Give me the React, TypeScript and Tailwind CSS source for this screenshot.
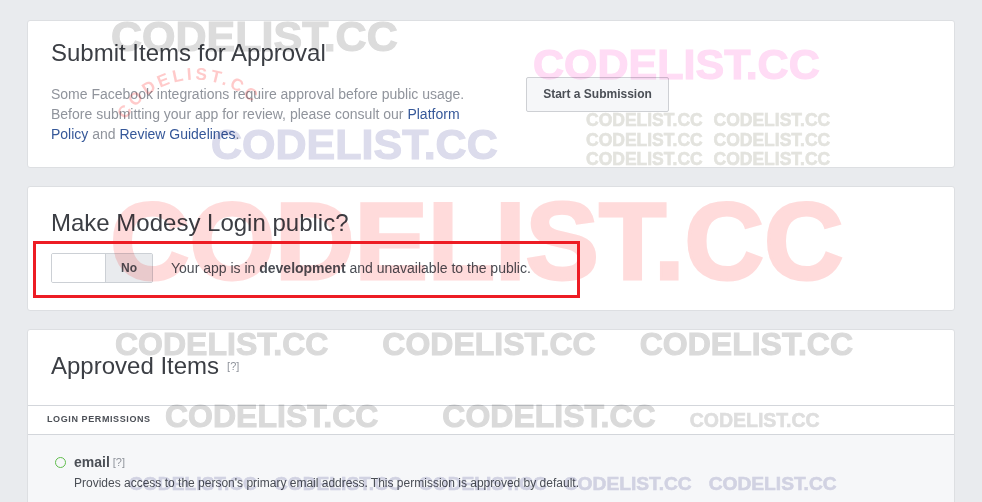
import React from "react";

export default function App() {
  return (
    <div className="relative w-[982px] h-[502px] overflow-hidden bg-[#e9ebee] font-['Liberation_Sans',Arial,sans-serif]">
      <div className="flex flex-col gap-[18px] pl-[27px] pt-[20px] w-[955px]">
        {/* Card 1 */}
        <div className="flex h-[148px] rounded-[3px] border border-[#dddfe2] bg-white px-[23px]">
          <div className="w-[440px] pt-[18px]">
            <h2 className="text-[24px] leading-[28px] text-[#3b3e44]">Submit Items for Approval</h2>
            <p className="mt-[17px] text-[14px] leading-[20px] text-[#90949c]">
              Some Facebook integrations require approval before public usage. Before submitting your app for review, please consult our{" "}
              <span className="text-[#365899]">Platform Policy</span> and{" "}
              <span className="text-[#365899]">Review Guidelines</span>.
            </p>
          </div>
          <div className="ml-[35px] flex items-center">
            <button className="h-[35px] w-[143px] rounded-[2px] border border-[#ced0d4] bg-[#f6f7f9] text-[12px] font-bold text-[#4b4f56]">
              Start a Submission
            </button>
          </div>
        </div>

        {/* Card 2 */}
        <div className="h-[125px] rounded-[3px] border border-[#dddfe2] bg-white px-[23px] pt-[22px]">
          <h2 className="text-[24px] leading-[28px] text-[#3b3e44]">Make Modesy Login public?</h2>
          <div className="mt-[16px] flex items-center">
            <div className="flex h-[30px] w-[102px] overflow-hidden rounded-[2px] border border-[#ccd0d5]">
              <div className="w-[53px] bg-white" />
              <div className="flex flex-1 items-center justify-center border-l border-[#ccd0d5] bg-[#e9ebee] text-[12px] font-bold text-[#4b4f56]">
                No
              </div>
            </div>
            <p className="ml-[18px] text-[14px] leading-[18px] text-[#4b4f56]">
              Your app is in <span className="font-bold">development</span> and unavailable to the public.
            </p>
          </div>
        </div>

        {/* Card 3 */}
        <div className="h-[200px] rounded-[3px] border border-[#dddfe2] bg-white">
          <div className="flex h-[75px] items-start px-[23px] pt-[22px]">
            <div className="flex items-center">
              <h2 className="text-[24px] leading-[28px] text-[#3b3e44]">Approved Items</h2>
              <span className="ml-[8px] text-[11px] text-[#90949c]">[?]</span>
            </div>
          </div>
          <div className="flex h-[30px] items-center border-y border-[#d3d6db] px-[19px]">
            <span className="text-[9px] font-bold tracking-[0.6px] text-[#4b4f56]">LOGIN PERMISSIONS</span>
          </div>
          <div className="h-[100px] bg-[#f6f7f9] pl-[27px] pt-[18px]">
            <div className="flex items-center">
              <div className="h-[11px] w-[11px] rounded-full border-[1.5px] border-[#5fbd4c]" />
              <span className="ml-[8px] text-[14px] font-bold leading-[18px] text-[#4b4f56]">email</span>
              <span className="ml-[3px] text-[11px] leading-[18px] text-[#90949c]">[?]</span>
            </div>
            <p className="ml-[19px] mt-[4px] text-[12px] leading-[16px] text-[#4b4f56]">
              Provides access to the person's primary email address. This permission is approved by default.
            </p>
          </div>
        </div>
      </div>

      {/* Watermarks (overlay, multiplied onto the page) */}
      <div className="pointer-events-none absolute inset-0 mix-blend-multiply font-['Liberation_Sans',Arial,sans-serif] font-bold leading-none whitespace-nowrap">
        <div className="absolute left-[111px] top-[15px] text-[43px] text-[#dcdcdc] [-webkit-text-stroke:1.2px_#dcdcdc]">CODELIST.CC</div>
        <div className="absolute left-[533px] top-[43px] text-[43px] text-[#ffdcf5] [-webkit-text-stroke:1.2px_#ffdcf5]">CODELIST.CC</div>
        <div className="absolute left-[211px] top-[123px] text-[43px] text-[#dcdcec] [-webkit-text-stroke:1.2px_#dcdcec]">CODELIST.CC</div>
        <div className="absolute left-[586px] top-[111px] flex flex-col text-[17.5px] leading-[19.5px] [word-spacing:6px] text-[#e3e3de] [-webkit-text-stroke:0.6px_#e3e3de]">
          <span>CODELIST.CC CODELIST.CC</span>
          <span>CODELIST.CC CODELIST.CC</span>
          <span>CODELIST.CC CODELIST.CC</span>
        </div>
        <svg className="absolute left-[100px] top-[50px] h-[150px] w-[200px]" viewBox="0 0 200 150">
          <defs>
            <path id="arcpath" d="M 26 70 A 80 80 0 0 1 166 72" fill="none" />
          </defs>
          <text fontFamily="Liberation Sans, Arial, sans-serif" fontWeight="700" fontSize="17" fill="#ffcaca">
            <textPath href="#arcpath" textLength="146" lengthAdjust="spacing">CODELIST.CC</textPath>
          </text>
        </svg>
        <div className="absolute left-[110px] top-[186px] text-[110px] text-[#ffdbdb] [-webkit-text-stroke:3px_#ffdbdb]">CODELIST.CC</div>
        <div className="absolute left-[115px] top-[328px] flex text-[32px] text-[#dadada] [-webkit-text-stroke:1px_#dadada]">
          <span>CODELIST.CC</span>
          <span className="ml-[54px]">CODELIST.CC</span>
          <span className="ml-[44px]">CODELIST.CC</span>
        </div>
        <div className="absolute left-[165px] top-[400px] flex items-baseline text-[32px] text-[#dadada] [-webkit-text-stroke:1px_#dadada]">
          <span>CODELIST.CC</span>
          <span className="ml-[64px]">CODELIST.CC</span>
          <span className="ml-[34px] text-[19.5px] text-[#dedede] [-webkit-text-stroke:0.6px_#dedede]">CODELIST.CC</span>
        </div>
        <div className="absolute left-[129px] top-[474px] flex gap-[17px] text-[19.2px] text-[#d9d9e8] [-webkit-text-stroke:0.6px_#d9d9e8]">
          <span>CODELIST.CC</span>
          <span>CODELIST.CC</span>
          <span>CODELIST.CC</span>
          <span>CODELIST.CC</span>
          <span>CODELIST.CC</span>
        </div>
      </div>

      {/* Red annotation box */}
      <div className="pointer-events-none absolute left-[33px] top-[241px] h-[57px] w-[547px] border-[3px] border-[#ed1c24]" />
    </div>
  );
}
